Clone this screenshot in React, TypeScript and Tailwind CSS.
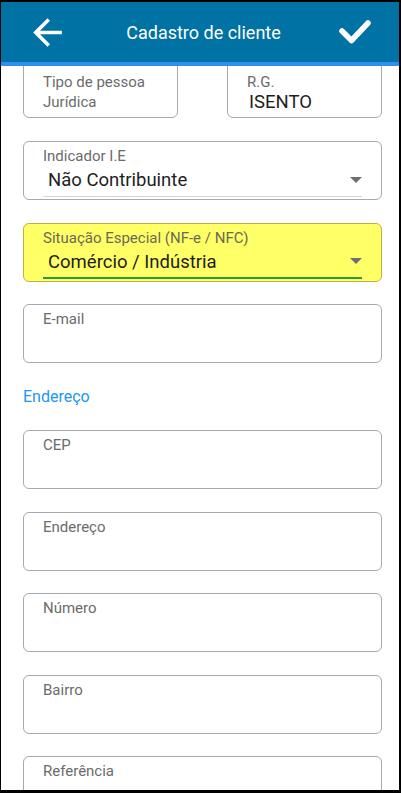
import React from 'react';

const FONT = { fontFamily: 'Roboto, "Noto Sans", sans-serif' };

function Caret() {
  return (
    <svg width="12" height="7" viewBox="0 0 12 7" className="shrink-0">
      <path d="M0 0h12L6 6z" fill="#6f6f6f" />
    </svg>
  );
}

function TextField({ label }: { label: string }) {
  return (
    <div className="h-[59px] rounded-[6px] border-[1.5px] border-[#a6a9b1] bg-white px-[19px] pt-[5px]">
      <div className="text-[15px] leading-[18px] text-[#6b6b6b]">{label}</div>
    </div>
  );
}

function SelectField({
  label,
  value,
  highlight,
}: {
  label: string;
  value: string;
  highlight?: boolean;
}) {
  return (
    <div
      className={
        highlight
          ? 'h-[59px] rounded-[6px] border-[1.5px] border-[#c2ad45] bg-[#ffff66] px-[19px] pt-[5px]'
          : 'h-[59px] rounded-[6px] border-[1.5px] border-[#a6a9b1] bg-white px-[19px] pt-[5px]'
      }
    >
      <div className={highlight ? 'text-[15px] leading-[18px] text-[#6a6a55]' : 'text-[15px] leading-[18px] text-[#6b6b6b]'}>
        {label}
      </div>
      <div
        className={
          highlight
            ? 'mt-[3px] flex items-center justify-between border-b-2 border-[#2f9a3c] pb-[3px] pl-[5px] pr-0'
            : 'mt-[3px] flex items-center justify-between border-b border-[#d6d6d6] pb-[4px] pl-[5px] pr-0'
        }
      >
        <span className="text-[18.5px] leading-[24px] text-[#1e1e1e]">{value}</span>
        <Caret />
      </div>
    </div>
  );
}

export default function App() {
  return (
    <div className="w-[401px] h-[793px] bg-black pt-[2px] pl-[1px] pr-[2px] pb-[3px]" style={FONT}>
      <div className="flex h-full flex-col overflow-hidden bg-white">
        {/* Header */}
        <div className="relative z-10 flex h-[60px] shrink-0 items-center justify-between bg-[#0072a4] pl-[25px] pr-[27px]">
          <svg width="43" height="43" viewBox="0 0 24 24">
            <path d="M20 11H7.83l5.59-5.59L12 4l-8 8 8 8 1.41-1.41L7.83 13H20v-2z" fill="#fff" />
          </svg>
          <span className="text-[18px] text-white">Cadastro de cliente</span>
          <svg width="34" height="28" viewBox="0 0 34 28">
            <path d="M4 13l9.5 9.5L30 5" fill="none" stroke="#fff" strokeWidth="5.5" strokeLinecap="round" strokeLinejoin="round" />
          </svg>
        </div>
        <div className="relative z-10 h-[4px] shrink-0 bg-[#2e8ff0]" />

        {/* Form */}
        <div className="flex flex-col pl-[22px] pr-[17px]">
          <div className="mt-[-8px] flex justify-between">
            <div className="h-[60px] w-[155px] rounded-[6px] border-[1.5px] border-[#a6a9b1] px-[19px] pt-[13px]">
              <div className="text-[15px] leading-[20px] text-[#6b6b6b]">Tipo de pessoa</div>
              <div className="text-[15px] leading-[20px] text-[#6b6b6b]">Jurídica</div>
            </div>
            <div className="h-[60px] w-[155px] rounded-[6px] border-[1.5px] border-[#a6a9b1] px-[19px] pt-[13px]">
              <div className="text-[15px] leading-[20px] text-[#6b6b6b]">R.G.</div>
              <div className="pl-[2px] text-[18.5px] leading-[20px] text-[#1e1e1e]">ISENTO</div>
            </div>
          </div>

          <div className="mt-[23px] flex flex-col gap-[22.5px]">
            <SelectField label="Indicador I.E" value="Não Contribuinte" />
            <SelectField label="Situação Especial (NF-e / NFC)" value="Comércio / Indústria" highlight />
            <TextField label="E-mail" />
          </div>

          <div className="mt-[24px] text-[16px] leading-[20px] text-[#2196f3]">Endereço</div>

          <div className="mt-[23px] flex flex-col gap-[22.5px]">
            <TextField label="CEP" />
            <TextField label="Endereço" />
            <TextField label="Número" />
            <TextField label="Bairro" />
            <TextField label="Referência" />
          </div>
        </div>
      </div>
    </div>
  );
}
